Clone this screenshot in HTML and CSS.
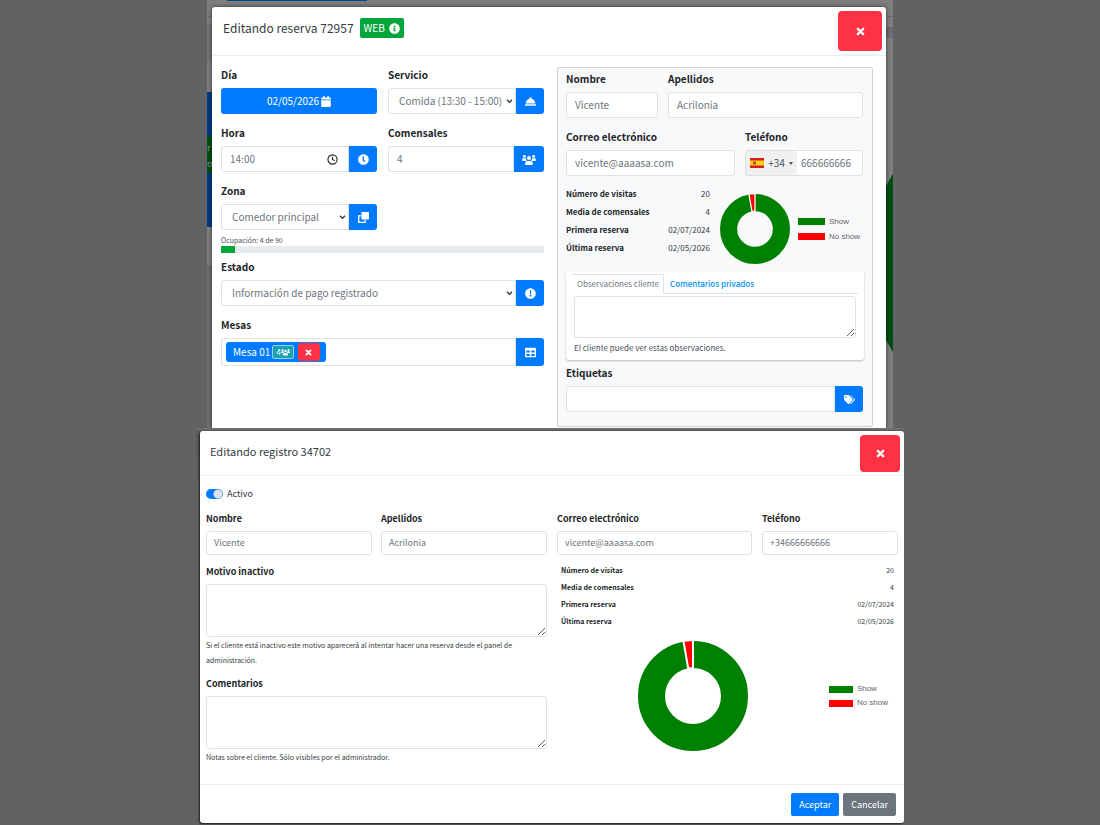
FILE: index.html
```html
<!DOCTYPE html>
<html lang="es">

<head>
    <meta charset="UTF-8">
    <meta name="viewport" content="width=device-width, initial-scale=1.0">
    <title>Editando reserva 72957</title>
    <link rel="stylesheet" href="styles.css">
</head>

<body>
    <!-- shared icons -->
    <svg class="sprite" aria-hidden="true">
        <symbol id="i-times" viewBox="0 0 10 10">
            <path d="M2 2l6 6M8 2l-6 6" stroke="currentColor" stroke-width="2.6" stroke-linecap="round" />
        </symbol>
        <symbol id="i-info" viewBox="0 0 512 512">
            <path fill="currentColor" d="M256 8C119 8 8 119 8 256s111 248 248 248 248-111 248-248S393 8 256 8zm0 110a42 42 0 110 84 42 42 0 010-84zm56 254c0 7-5 12-12 12h-88c-7 0-12-5-12-12v-24c0-7 5-12 12-12h12v-64h-12c-7 0-12-5-12-12v-24c0-7 5-12 12-12h64c7 0 12 5 12 12v100h12c7 0 12 5 12 12z" />
        </symbol>
        <symbol id="i-calendar" viewBox="0 0 448 512">
            <path fill="currentColor" d="M12 192h424c7 0 12 5 12 12v260c0 27-21 48-48 48H48c-27 0-48-21-48-48V204c0-7 5-12 12-12zm436-44v-36c0-27-21-48-48-48h-48V12c0-7-5-12-12-12h-40c-7 0-12 5-12 12v52H160V12c0-7-5-12-12-12h-40c-7 0-12 5-12 12v52H48C21 64 0 85 0 112v36c0 7 5 12 12 12h424c7 0 12-5 12-12z" />
        </symbol>
        <symbol id="i-bell" viewBox="0 0 512 512">
            <path fill="currentColor" d="M288 131v-19h16c9 0 16-7 16-16V80c0-9-7-16-16-16h-96c-9 0-16 7-16 16v16c0 9 7 16 16 16h16v19C118 146 35 236 32 352h448c-3-116-86-206-192-221zM496 384H16c-9 0-16 7-16 16v32c0 9 7 16 16 16h480c9 0 16-7 16-16v-32c0-9-7-16-16-16z" />
        </symbol>
        <symbol id="i-clock" viewBox="0 0 512 512">
            <path fill="currentColor" d="M256 8C119 8 8 119 8 256s111 248 248 248 248-111 248-248S393 8 256 8zm80 336l-18 22c-5 6-13 7-18 3l-74-56c-8-6-14-16-14-26V116c0-7 6-12 12-12h40c7 0 12 5 12 12v150l58 52c5 5 6 20 2 26z" />
        </symbol>
        <symbol id="i-users" viewBox="0 0 640 512">
            <g fill="currentColor">
                <circle cx="104" cy="112" r="68" />
                <circle cx="536" cy="112" r="68" />
                <circle cx="320" cy="184" r="92" />
                <path d="M0 290v-32c0-36 28-60 62-60h80c20 0 38 8 50 22-4 40 8 74 34 100H30c-17 0-30-13-30-30zM640 290v-32c0-36-28-60-62-60h-80c-20 0-38 8-50 22 4 40-8 74-34 100h196c17 0 30-13 30-30zM140 464v-34c0-62 50-110 110-110h140c60 0 110 48 110 110v34c0 27-21 48-48 48H188c-27 0-48-21-48-48z" />
            </g>
        </symbol>
        <symbol id="i-clone" viewBox="0 0 512 512">
            <path fill="currentColor" d="M464 0H208c-27 0-48 21-48 48v256c0 27 21 48 48 48h256c27 0 48-21 48-48V48c0-27-21-48-48-48zM128 384V144H48c-27 0-48 21-48 48v272c0 27 21 48 48 48h272c27 0 48-21 48-48v-80h-64v64H64V208h64v176z" />
        </symbol>
        <symbol id="i-exclamation" viewBox="0 0 512 512">
            <path fill="currentColor" d="M256 8C119 8 8 119 8 256s111 248 248 248 248-111 248-248S393 8 256 8zm0 300a46 46 0 110 92 46 46 0 010-92zm-34-188c0-7 5-12 12-12h44c7 0 12 5 12 12l-8 150c0 6-5 11-12 11h-28c-7 0-12-5-12-11z" />
        </symbol>
        <symbol id="i-table" viewBox="0 0 512 512">
            <path fill="currentColor" fill-rule="evenodd" d="M464 32H48C21 32 0 53 0 80v352c0 27 21 48 48 48h416c27 0 48-21 48-48V80c0-27-21-48-48-48zM64 160h156v92H64zm228 0h156v92H292zM64 322h156v94H64zm228 0h156v94H292z" />
        </symbol>
        <symbol id="i-tags" viewBox="0 0 640 512">
            <path fill="currentColor" d="M498 225L287 14a48 48 0 00-34-14H48C21 0 0 21 0 48v205c0 12 5 25 14 34l211 211c19 19 49 19 68 0l205-205c19-19 19-49 0-68zM112 160a48 48 0 110-96 48 48 0 010 96zm514 133L421 498c-19 19-49 19-68 0l205-205c25-25 20-70 0-90L355 0h18c12 0 25 5 34 14l219 211c19 19 19 49 0 68z" />
        </symbol>
        <symbol id="i-donut" viewBox="-55 -55 110 110">
            <circle r="41.5" fill="none" stroke="#008000" stroke-width="27" />
            <path fill="#ff0000" stroke="#fff" stroke-width="2" d="M0-56V-28L-4.800-27.600L-9.600-55.300z" />
        </symbol>
    </svg>

    <main>
        <section class="stage stage-reserva">
            <!-- page behind the dialog -->
            <svg class="behind" width="686" height="428" aria-hidden="true">
                <rect width="686" height="428" fill="#7e7e7e" />
                <rect y="16" width="686" height="1" fill="#6b6b6b" />
                <rect x="20" width="140" height="1" fill="#004b8c" />
                <rect y="25" width="5" height="36" fill="#727375" />
                <rect y="92" width="5" height="135" fill="#003a80" />
                <rect y="136" width="5" height="37" fill="#005014" />
                <text x="0" y="151" class="behind-text">r</text>
                <text x="0" y="167" class="behind-text">o</text>
                <rect y="265" width="5" height="163" fill="#6e6e6e" />
                <rect x="679" y="27" width="7" height="11" fill="#6b6d70" />
                <path d="M679 186l8-14v182l-8-14z" fill="#004d14" />
            </svg>

            <div class="modal modal-reserva" role="dialog" aria-labelledby="t-reserva">
                <header class="modal-header">
                    <h1 id="t-reserva">Editando reserva 72957</h1>
                    <button type="button" class="badge-web">WEB <svg class="icon"><use href="#i-info" /></svg></button>
                    <button type="button" class="close" aria-label="Cerrar"><svg class="icon"><use href="#i-times" /></svg></button>
                </header>

                <form class="reserva-body">
                    <div class="reserva-left">
                        <div class="cols">
                            <div class="field">
                                <label for="dia">Día</label>
                                <button type="button" id="dia" class="btn-date">02/05/2026 <svg class="icon"><use href="#i-calendar" /></svg></button>
                            </div>
                            <div class="field">
                                <label for="servicio">Servicio</label>
                                <div class="group">
                                    <select id="servicio"><option>Comida (13:30 - 15:00)</option></select>
                                    <button type="button" aria-label="Servicios"><svg class="icon"><use href="#i-bell" /></svg></button>
                                </div>
                            </div>
                            <div class="field">
                                <label for="hora">Hora</label>
                                <div class="group">
                                    <div class="time">
                                        <input type="text" id="hora" value="14:00">
                                        <svg class="icon" viewBox="0 0 12 12" fill="none" stroke="#222" stroke-width="1.2"><circle cx="6" cy="6" r="5" /><path d="M6 3v3l2.500 1.500" /></svg>
                                    </div>
                                    <button type="button" aria-label="Horas"><svg class="icon"><use href="#i-clock" /></svg></button>
                                </div>
                            </div>
                            <div class="field">
                                <label for="comensales">Comensales</label>
                                <div class="group">
                                    <input type="text" id="comensales" value="4">
                                    <button type="button" class="wide" aria-label="Comensales"><svg class="icon"><use href="#i-users" /></svg></button>
                                </div>
                            </div>
                            <div class="field field-zona">
                                <label for="zona">Zona</label>
                                <div class="group">
                                    <select id="zona"><option>Comedor principal</option></select>
                                    <button type="button" aria-label="Zonas"><svg class="icon"><use href="#i-clone" /></svg></button>
                                </div>
                            </div>
                        </div>
                        <p class="occupancy">Ocupación: 4 de 90</p>
                        <div class="progress"><div class="progress-bar" style="width: 4.4%"></div></div>
                        <div class="field">
                            <label for="estado">Estado</label>
                            <div class="group">
                                <select id="estado"><option>Información de pago registrado</option></select>
                                <button type="button" aria-label="Estados"><svg class="icon"><use href="#i-exclamation" /></svg></button>
                            </div>
                        </div>
                        <div class="field">
                            <label for="mesas">Mesas</label>
                            <div class="group group-mesas">
                                <div class="mesas">
                                    <span class="mesa">Mesa 01
                                        <span class="mesa-size">4<svg class="icon"><use href="#i-users" /></svg></span>
                                        <button type="button" aria-label="Quitar mesa"><svg class="icon"><use href="#i-times" /></svg></button>
                                    </span>
                                </div>
                                <button type="button" id="mesas" aria-label="Mesas"><svg class="icon"><use href="#i-table" /></svg></button>
                            </div>
                        </div>
                    </div>

                    <div class="client">
                        <div class="cols cols-name">
                            <div class="field">
                                <label for="nombre">Nombre</label>
                                <input type="text" id="nombre" value="Vicente">
                            </div>
                            <div class="field">
                                <label for="apellidos">Apellidos</label>
                                <input type="text" id="apellidos" value="Acrilonia">
                            </div>
                        </div>
                        <div class="cols cols-contact">
                            <div class="field">
                                <label for="correo">Correo electrónico</label>
                                <input type="email" id="correo" value="vicente@aaaasa.com">
                            </div>
                            <div class="field">
                                <label for="telefono">Teléfono</label>
                                <div class="phone">
                                    <button type="button" class="prefix">
                                        <svg class="flag" viewBox="0 0 14 10"><rect width="14" height="10" fill="#d81e1e" /><rect y="2.500" width="14" height="5" fill="#ffcd1a" /><rect x="3" y="3.500" width="3" height="3" fill="#a8562a" /></svg>
                                        +34
                                        <svg class="caret" viewBox="0 0 4 3"><path d="M0 0h4L2 3z" fill="#555" /></svg>
                                    </button>
                                    <input type="tel" id="telefono" value="666666666">
                                </div>
                            </div>
                        </div>

                        <div class="summary">
                            <table class="stats">
                                <tr><th>Número de visitas</th><td>20</td></tr>
                                <tr><th>Media de comensales</th><td>4</td></tr>
                                <tr><th>Primera reserva</th><td>02/07/2024</td></tr>
                                <tr><th>Última reserva</th><td>02/05/2026</td></tr>
                            </table>
                            <svg class="donut"><use href="#i-donut" /></svg>
                            <ul class="legend">
                                <li class="show">Show</li>
                                <li class="no-show">No show</li>
                            </ul>
                        </div>

                        <div class="notes">
                            <nav class="tabs">
                                <a href="#observaciones" class="active">Observaciones cliente</a>
                                <a href="#privados">Comentarios privados</a>
                            </nav>
                            <textarea id="observaciones" aria-label="Observaciones cliente"></textarea>
                            <p>El cliente puede ver estas observaciones.</p>
                        </div>

                        <div class="field">
                            <label for="etiquetas">Etiquetas</label>
                            <div class="group">
                                <input type="text" id="etiquetas">
                                <button type="button" aria-label="Etiquetas"><svg class="icon"><use href="#i-tags" /></svg></button>
                            </div>
                        </div>
                    </div>
                </form>
            </div>
        </section>

        <section class="stage stage-registro">
            <div class="modal modal-registro" role="dialog" aria-labelledby="t-registro">
                <header class="modal-header">
                    <h2 id="t-registro">Editando registro 34702</h2>
                    <button type="button" class="close" aria-label="Cerrar"><svg class="icon"><use href="#i-times" /></svg></button>
                </header>

                <form class="registro-body">
                    <label class="switch"><input type="checkbox" checked> Activo</label>
                    <div class="registro-cols">
                        <div>
                            <div class="cols">
                                <div class="field">
                                    <label for="r-nombre">Nombre</label>
                                    <input type="text" id="r-nombre" value="Vicente">
                                </div>
                                <div class="field">
                                    <label for="r-apellidos">Apellidos</label>
                                    <input type="text" id="r-apellidos" value="Acrilonia">
                                </div>
                            </div>
                            <div class="field">
                                <label for="motivo">Motivo inactivo</label>
                                <textarea id="motivo"></textarea>
                                <p class="help">Si el cliente está inactivo este motivo aparecerá al intentar hacer una reserva desde el panel de administración.</p>
                            </div>
                            <div class="field">
                                <label for="comentarios">Comentarios</label>
                                <textarea id="comentarios"></textarea>
                                <p class="help">Notas sobre el cliente. Sólo visibles por el administrador.</p>
                            </div>
                        </div>
                        <div>
                            <div class="cols cols-contact">
                                <div class="field">
                                    <label for="r-correo">Correo electrónico</label>
                                    <input type="email" id="r-correo" value="vicente@aaaasa.com">
                                </div>
                                <div class="field">
                                    <label for="r-telefono">Teléfono</label>
                                    <input type="tel" id="r-telefono" value="+34666666666">
                                </div>
                            </div>
                            <table class="stats">
                                <tr><th>Número de visitas</th><td>20</td></tr>
                                <tr><th>Media de comensales</th><td>4</td></tr>
                                <tr><th>Primera reserva</th><td>02/07/2024</td></tr>
                                <tr><th>Última reserva</th><td>02/05/2026</td></tr>
                            </table>
                            <div class="chart">
                                <div class="chart-area"><svg class="donut"><use href="#i-donut" /></svg></div>
                                <ul class="legend">
                                    <li class="show">Show</li>
                                    <li class="no-show">No show</li>
                                </ul>
                            </div>
                        </div>
                    </div>
                </form>

                <footer class="modal-footer">
                    <button type="button" class="btn-ok">Aceptar</button>
                    <button type="button" class="btn-cancel">Cancelar</button>
                </footer>
            </div>
        </section>
    </main>
</body>

</html>
```

FILE: styles.css
```css
* {
    box-sizing: border-box;
}

body {
    margin: 0;
    background-color: #616264;
    color: #212529;
    font-family: "Noto Sans CJK SC", "Noto Sans", sans-serif;
    font-size: 10px;
    line-height: 20px;
}

h1,
h2,
p,
ul {
    margin: 0;
    padding: 0;
    font-weight: 400;
}

button,
input,
select,
textarea {
    font: inherit;
    margin: 0;
}

button {
    display: flex;
    align-items: center;
    justify-content: center;
    padding: 0;
    border: 0;
    background-color: #007bff;
    color: #fff;
}

input,
select,
textarea {
    display: block;
    width: 100%;
    min-width: 0;
    border: 1px solid #dde2e6;
    border-radius: 3px;
    background-color: #fff;
    color: #6c757d;
}

input {
    height: 26px;
    padding: 0 8px 1px;
}

select {
    appearance: none;
    height: 26px;
    padding: 0 12px 1px 10px;
    background: #fff url("data:image/svg+xml,%3Csvg xmlns='http://www.w3.org/2000/svg' viewBox='0 0 8 6'%3E%3Cpath d='M1 1l3 3 3-3' fill='none' stroke='%23343a40' stroke-width='1.600'/%3E%3C/svg%3E") no-repeat right 2px center / 7px 5px;
}

.sprite {
    position: absolute;
    width: 0;
    height: 0;
}

.icon {
    flex: none;
    width: 11px;
    height: 11px;
}

.stage {
    position: relative;
    margin: 0 auto;
}

.stage-reserva {
    max-width: 686px;
    padding: 7px 7px 0 5px;
}

.stage-registro {
    max-width: 708px;
    padding: 3px 0 2px 4px;
    background: linear-gradient(#777, #58595a 3px, #616264 60px);
}

.behind {
    position: absolute;
    top: 0;
    left: 0;
}

.behind-text {
    font-size: 9px;
    fill: #8a8a8a;
}

.modal {
    position: relative;
    background-color: #fff;
    box-shadow: 0 0 4px rgba(0, 0, 0, .6);
}

.modal-reserva {
    border-radius: 3px 3px 0 0;
}

.modal-registro {
    border-radius: 3px;
    font-size: 9px;
    line-height: 18px;
    box-shadow: -1px 1px 2px rgba(0, 0, 0, .7);
}

.modal-header {
    display: flex;
    align-items: flex-start;
    gap: 6px;
    height: 49px;
    padding: 4px 4px 0 11px;
    border-bottom: 1px solid #eceeef;
}

.modal-header h1,
.modal-header h2 {
    padding-top: 7px;
    font-size: 12px;
    line-height: 20px;
    color: #343a40;
}

.badge-web {
    gap: 4px;
    height: 20px;
    margin-top: 7px;
    padding: 0 4px;
    border-radius: 2px;
    background-color: #00a63a;
}

.close {
    width: 44px;
    height: 40px;
    margin-left: auto;
    border-radius: 4px;
    background-color: #ff3145;
}

.close .icon {
    width: 9px;
    height: 9px;
}

/* fields */

.cols {
    display: grid;
    grid-template-columns: 1fr 1fr;
    column-gap: 11px;
}

.field {
    margin-bottom: 9px;
}

.field > label {
    display: block;
    margin-bottom: 3px;
    font-weight: 700;
}

.group {
    display: flex;
}

.group > button {
    flex: none;
    width: 28px;
    border-radius: 0 3px 3px 0;
}

.group > .wide {
    width: 30px;
}

.group .wide .icon {
    width: 14px;
}

.group input,
.group select {
    border-radius: 3px 0 0 3px;
}

.time {
    position: relative;
    flex: 1;
}

.time .icon {
    position: absolute;
    top: 8px;
    right: 11px;
}

.btn-date {
    gap: 2px;
    width: 100%;
    height: 26px;
    border-radius: 3px;
}

.btn-date .icon {
    width: 10px;
}

/* reserva */

.reserva-body {
    display: grid;
    grid-template-columns: 323fr 316fr;
    gap: 13px;
    padding: 9px 13px 1px 9px;
}

.field-zona {
    margin-bottom: 0;
}

.occupancy {
    margin-top: 4px;
    font-size: 7px;
    line-height: 12px;
    color: #495057;
}

.progress {
    height: 7px;
    margin-bottom: 4px;
    background-color: #e9ecef;
}

.progress-bar {
    height: 100%;
    background-color: #00a63a;
}

.mesas {
    flex: 1;
    height: 28px;
    padding: 3px 4px;
    border: 1px solid #dde2e6;
    border-radius: 3px 0 0 3px;
}

.mesa {
    display: inline-flex;
    align-items: center;
    height: 20px;
    padding-left: 7px;
    padding-right: 6px;
    border-radius: 3px;
    background-color: #007bff;
    color: #fff;
}

.mesa-size {
    display: flex;
    align-items: center;
    height: 14px;
    margin: 0 4px 0 2px;
    padding: 0 3px;
    border: 1px solid #9bd3dc;
    border-radius: 2px;
    background-color: #17a2b8;
    font-size: 8px;
}

.mesa-size .icon {
    width: 9px;
    height: 8px;
}

.mesa button {
    width: 22px;
    height: 18px;
    border-radius: 3px;
    background-color: #ff3145;
}

.mesa button .icon {
    width: 7px;
    height: 7px;
}

.client {
    margin-top: 2px;
    padding: 1px 9px 5px 8px;
    border: 1px solid #cdd3d8;
    border-radius: 2px;
    background-color: #f8f9fb;
}

.client .cols {
    column-gap: 10px;
}

.cols-name {
    grid-template-columns: 92fr 195fr;
}

.cols-contact {
    grid-template-columns: 169fr 118fr;
}

.phone {
    display: flex;
}

.phone input {
    padding: 0 4px 1px;
    border-left: 0;
    border-radius: 0 3px 3px 0;
}

.phone .prefix {
    flex: none;
    gap: 4px;
    width: 52px;
    border: 1px solid #dde2e6;
    border-right: 0;
    border-radius: 3px 0 0 3px;
    background-color: #f0f0f0;
    color: #495057;
}

.flag {
    width: 14px;
    height: 10px;
}

.caret {
    width: 4px;
    height: 3px;
}

.summary {
    display: flex;
    align-items: center;
    height: 86px;
}

.stats {
    border-collapse: collapse;
    font-size: 8px;
    line-height: 18px;
}

.stats th {
    padding: 0;
    text-align: left;
}

.stats td {
    padding: 0;
    text-align: right;
    color: #343a40;
}

.summary .stats {
    align-self: flex-start;
    width: 144px;
}

.summary .donut {
    width: 70px;
    height: 70px;
    margin: 2px 8px 0 10px;
}

.summary .legend {
    margin-top: 2px;
}

.legend {
    list-style: none;
    font-family: "Liberation Sans", Arial, sans-serif;
    font-size: 8px;
    line-height: 15px;
    color: #666;
}

.legend li {
    display: flex;
    align-items: center;
    gap: 4px;
    white-space: nowrap;
}

.legend li::before {
    content: "";
    width: 27px;
    height: 7px;
}

.legend .show::before {
    background-color: #008000;
}

.legend .no-show::before {
    background-color: #ff0000;
}

.notes {
    height: 89px;
    margin-right: -1px;
    margin-bottom: 3px;
    padding: 3px 6px;
    border-radius: 3px;
    background-color: #fff;
    box-shadow: 0 1px 2px rgba(0, 0, 0, .25);
    font-size: 8px;
}

.tabs {
    display: flex;
    border-bottom: 1px solid #dee2e6;
    line-height: 18px;
}

.tabs a {
    padding: 1px 6px 0;
    color: #0090f0;
    text-decoration: none;
    font-weight: 500;
}

.tabs .active {
    margin-bottom: -1px;
    padding: 0 4px 0 5px;
    border: 1px solid #dee2e6;
    border-bottom-color: #fff;
    border-left: 0;
    border-radius: 0 2px 0 0;
    background-color: #fff;
    color: #6c757d;
    font-weight: 400;
}

.notes textarea {
    width: auto;
    min-width: calc(100% - 4px);
    height: 42px;
    margin: 2px 2px 0;
}

.notes p {
    padding: 0 2px;
    color: #495057;
}

/* registro */

.modal-registro .modal-header {
    height: 45px;
    padding-left: 10px;
}

.modal-registro h2 {
    padding-top: 6px;
    font-size: 11px;
}

.modal-registro .close {
    width: 40px;
    height: 37px;
}

.registro-body {
    padding: 8px 6px 12px;
}

.switch {
    display: flex;
    align-items: center;
    gap: 4px;
    height: 20px;
    margin-bottom: 6px;
    color: #343a40;
}

.switch input {
    appearance: none;
    width: 17px;
    height: 10px;
    border: 0;
    border-radius: 5px;
    background: radial-gradient(circle at 12px 5px, #dee2e6 4px, #007bff 5px);
}

.registro-cols {
    display: grid;
    grid-template-columns: 1fr 1fr;
    gap: 10px;
}

.registro-cols .field {
    margin-bottom: 7px;
}

.registro-cols .cols {
    column-gap: 9px;
    margin-bottom: 1px;
}

.registro-cols .cols-contact {
    grid-template-columns: 195fr 136fr;
    column-gap: 10px;
    margin-bottom: 0;
}

.registro-cols input {
    height: 24px;
    padding: 0 7px 1px;
}

.registro-cols textarea {
    height: 53px;
}

.help {
    margin-top: 1px;
    font-size: 7px;
    line-height: 15px;
    color: #343a40;
}

.registro-cols .stats {
    width: calc(100% - 8px);
    margin: 0 4px;
    font-size: 7px;
    line-height: 17px;
}

.chart {
    display: flex;
    align-items: center;
    padding: 11px 10px 0 0;
}

.chart-area {
    display: flex;
    flex: 1;
    justify-content: center;
}

.chart .donut {
    width: 110px;
    height: 110px;
}

.chart .legend {
    line-height: 14px;
}

.chart .legend li::before {
    width: 24px;
}

.modal-footer {
    display: flex;
    justify-content: flex-end;
    gap: 4px;
    padding: 8px 8px 7px;
    border-top: 1px solid #eceeef;
}

.modal-footer button {
    height: 23px;
    padding: 0 8px;
    border-radius: 2px;
}

.modal-footer .btn-cancel {
    background-color: #6c757d;
}
```
